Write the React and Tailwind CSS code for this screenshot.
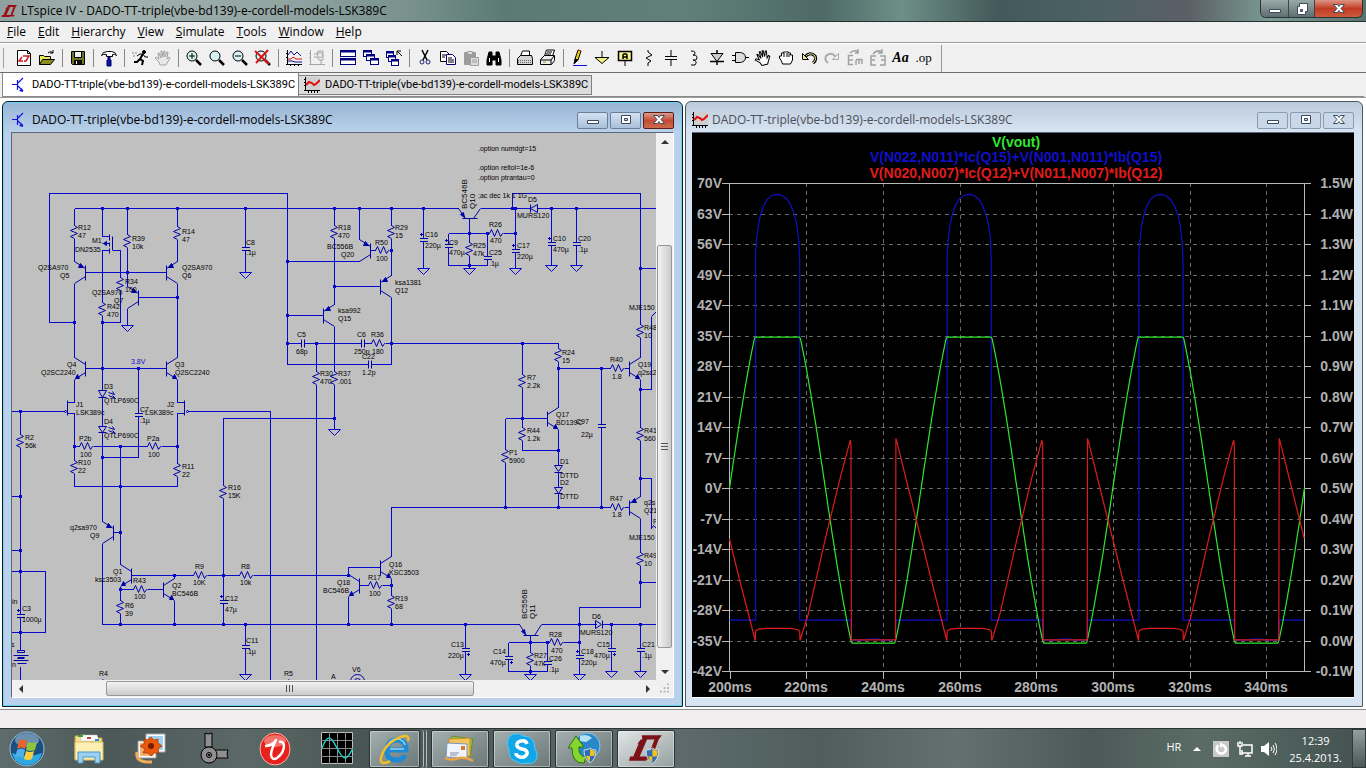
import { useState } from "react";

const DOC = "DADO-TT-triple(vbe-bd139)-e-cordell-models-LSK389C";

/* ---------- schematic data ---------- */

const WIRES = [
    "M74 322H49V193H287V364H368M371 364H391V297",
    "M74 208H458M480 208H529M537 208H656",
    "M74 208V225M74 238V261M74 283V357M74 379V402H67M67 413H74V460M74 473V486H177V476M177 463V413H184M184 402H177V379M177 357V283M177 261V239M177 226V208",
    "M85 272H166M85 368H166M138 297H177M127 208V234M127 247V286M127 308V325",
    "M102 208V236H109M109 250H102V302M102 315V390M102 397V426M102 432V521M112 250H120V277M120 290V322H102",
    "M138 368V413M138 416V457H102M11 411H64M187 411H270V680",
    "M74 446H79M93 446H147M161 446H177M120 446V564M113 532H120M102 543V624H519",
    "M131 575H193M207 575H239M253 575H348V567H380M120 586V600M120 613V624M120 589H133M147 589H163M174 575V578M174 600V624",
    "M223 624V603M223 600V575V498M223 485V418H334M20 411V434M20 447V614M20 617V650M20 666V680",
    "M11 496H20M11 550H20M11 571H45V632H11",
    "M245 208V247M245 250V272M245 624V645M245 648V674",
    "M287 343H301M304 343H361M364 343H371M385 343H558V348M316 343V371M316 384V680",
    "M334 208V225M334 238V304M334 326V371M334 384V429M334 286H380M287 315H323",
    "M391 208V225M391 238V275M370 250H375M389 250H391M359 208V239M359 261H287",
    "M423 208V238M423 241V268M448 233H489M503 233H515M448 233V244M448 247V265H487V259M487 256V233",
    "M469 218V242M469 255V268M515 208V249M515 252V268M512 208V193H640V324M640 337V357M640 268H656",
    "M551 208V242M551 245V265M576 208V242M576 245V265",
    "M640 379V427M640 440V496M640 518V552M640 565V607H579V655M579 658V674M640 389H651V316M640 478H651V528M640 582H656",
    "M558 361V407M558 429V465M558 472V487M558 493V507M558 368H610M624 368H629M505 418H547",
    "M522 343V374M522 387V427M522 440V450H558M505 418V449M505 462V507M601 368V424M601 427V507",
    "M391 556V507H610M624 507H629M391 578V595M391 608V624M359 585H368M382 585H391M348 596V624",
    "M541 624H596M602 624H656M530 635V652M530 665V674M508 642H549M563 642H579M508 642V656M508 659V671H547V664M547 661V642",
    "M465 624V648M465 651V674M611 624V648M611 651V671M640 624V648M640 651V671",
];

const DOTS = [
    [102, 208], [127, 208], [177, 208], [245, 208], [334, 208], [359, 208], [391, 208], [423, 208], [512, 208], [515, 208], [551, 208], [576, 208],
    [127, 272], [177, 297], [102, 322], [74, 322], [102, 368], [138, 368], [20, 411], [74, 446], [120, 446], [177, 446], [102, 457], [120, 486],
    [20, 496], [20, 550], [20, 571], [20, 632], [120, 532], [120, 589], [174, 575], [223, 575], [348, 575], [120, 624], [174, 624], [223, 624],
    [245, 624], [348, 624], [391, 624], [465, 624], [391, 585], [334, 418], [287, 261], [287, 315], [287, 343], [316, 343], [391, 343], [334, 286],
    [391, 250], [469, 233], [487, 233], [515, 233], [469, 265], [522, 343], [558, 368], [601, 368], [522, 418], [558, 450], [505, 507], [558, 507],
    [601, 507], [640, 268], [640, 389], [640, 478], [640, 582], [579, 624], [579, 642], [611, 624], [640, 624], [530, 642], [547, 642], [530, 671],
];

const RES_V = [
    [74, 225], [177, 226], [127, 234], [120, 277], [102, 302], [74, 460], [177, 463], [20, 434], [223, 485], [120, 600], [334, 225], [391, 225],
    [316, 371], [334, 371], [469, 242], [640, 324], [640, 427], [640, 552], [558, 348], [522, 374], [522, 427], [505, 449], [391, 595], [530, 652],
    [102, 679], [288, 679],
];
const RES_H = [[79, 446], [147, 446], [133, 589], [193, 575], [239, 575], [371, 343], [375, 250], [489, 233], [610, 368], [610, 507], [368, 585], [549, 642]];

const CAPS_V = [
    [138, 413], [223, 600, "+"], [20, 614, "+"], [245, 247], [245, 645], [423, 238, "+"], [448, 244, "+"], [487, 256], [515, 249, "+"], [551, 242, "+"],
    [576, 242], [601, 424], [465, 648, "-"], [508, 656, "-"], [547, 661], [579, 655, "+"], [611, 648, "-"], [640, 648],
];
const CAPS_H = [[301, 343], [361, 343], [368, 364]];
const GROUNDS = [[127, 325], [245, 272], [245, 674], [334, 429], [423, 268], [469, 268], [515, 268], [551, 265], [576, 265], [465, 674], [530, 674], [579, 674], [611, 671], [640, 671]];

// [bar x, centre y, side of the arms, type]
const TRANSISTORS = [
    [85, 272, -1, "pnp"], [166, 272, 1, "pnp"], [138, 297, -1, "pnp"], [85, 368, -1, "npn"], [166, 368, 1, "npn"], [113, 532, -1, "pnp"],
    [131, 575, -1, "npn"], [163, 589, 1, "npn"], [323, 315, 1, "pnp"], [380, 286, 1, "pnp"], [370, 250, -1, "pnp"], [380, 567, 1, "npn"],
    [359, 585, -1, "npn"], [547, 418, 1, "npn"], [629, 368, 1, "npn"], [629, 507, 1, "pnp"],
];

const LABELS = [
    [78, 230, "R12"], [78, 238, "47"], [92, 243, "M1"], [75, 252, "DN2535"], [132, 241, "R39"], [132, 249, "10k"], [182, 234, "R14"], [182, 242, "47"],
    [38, 270, "Q2SA970"], [60, 278, "Q5"], [182, 270, "Q2SA970"], [182, 278, "Q6"], [125, 284, "R34"], [125, 292, "100"], [92, 295, "Q2SA970"],
    [114, 303, "Q7"], [107, 309, "R42"], [107, 317, "470"], [67, 367, "Q4"], [41, 375, "Q2SC2240"], [175, 367, "Q3"], [175, 375, "Q2SC2240"],
    [104, 389, "D3"], [104, 403, "QTLP690C"], [76, 407, "J1"], [76, 415, "LSK389c"], [167, 407, "J2"], [145, 415, "LSK389c"], [140, 412, "C7"],
    [140, 423, ".1µ"], [104, 424, "D4"], [104, 438, "QTLP690C"], [79, 441, "P2b"], [80, 457, "100"], [147, 441, "P2a"], [148, 457, "100"],
    [78, 465, "R10"], [78, 473, "22"], [182, 469, "R11"], [182, 477, "22"], [25, 440, "R2"], [25, 448, "56k"], [70, 530, "q2sa970"], [90, 538, "Q9"],
    [113, 574, "Q1"], [95, 582, "ksc3503"], [133, 583, "R43"], [134, 599, "100"], [172, 588, "Q2"], [172, 596, "BC546B"], [125, 608, "R6"],
    [125, 616, "39"], [195, 569, "R9"], [193, 585, "10K"], [241, 569, "R8"], [240, 585, "10k"], [228, 490, "R16"], [228, 498, "15K"],
    [225, 601, "C12"], [225, 612, "47µ"], [22, 611, "C3"], [22, 622, "1000µ"], [12, 604, "in"], [11, 647, "s"], [12, 667, "n"], [99, 676, "R4"],
    [284, 676, "R5"], [246, 245, "C8"], [246, 255, ".1µ"], [246, 643, "C11"], [246, 654, ".1µ"], [338, 230, "R18"], [338, 238, "470"],
    [327, 249, "BC556B"], [341, 257, "Q20"], [375, 245, "R50"], [376, 261, "100"], [395, 230, "R29"], [395, 238, "15"], [425, 237, "C16"],
    [425, 248, "220µ"], [395, 285, "ksa1381"], [395, 293, "Q12"], [338, 313, "ksa992"], [338, 321, "Q15"], [297, 337, "C5"], [296, 354, "68p"],
    [357, 337, "C6"], [354, 354, "250p"], [371, 337, "R36"], [372, 354, "180"], [362, 359, "C22"], [362, 375, "1.2p"], [320, 376, "R30"],
    [320, 384, "470"], [338, 376, "R37"], [338, 384, ".001"], [478, 151, ".option numdgt=15"], [478, 170, ".option reltol=1e-6"],
    [478, 180, ".option ptrantau=0"], [478, 198, ";ac dec 1k 1 1G"], [528, 202, "D5"], [517, 218, "MURS120"], [489, 227, "R26"], [490, 243, "470"],
    [449, 245, "C9"], [449, 255, "470µ"], [473, 248, "R25"], [473, 256, "47k"], [489, 255, "C25"], [489, 266, ".1µ"], [517, 248, "C17"],
    [517, 259, "220µ"], [553, 241, "C10"], [553, 252, "470µ"], [578, 241, "C20"], [578, 252, ".1µ"], [629, 310, "MJE150"], [644, 330, "R48"],
    [644, 338, "10"], [562, 355, "R24"], [562, 363, "15"], [610, 362, "R40"], [612, 379, "1.8"], [638, 367, "Q19"], [638, 375, "q2sc2"],
    [527, 380, "R7"], [527, 388, "2.2k"], [556, 417, "Q17"], [556, 425, "BD139C"], [576, 424, "C97"], [581, 437, "22µ"], [527, 433, "R44"],
    [527, 441, "1.2k"], [509, 455, "P1"], [509, 463, "5900"], [560, 464, "D1"], [560, 478, "DTTD"], [560, 485, "D2"], [560, 499, "DTTD"],
    [644, 433, "R41"], [644, 441, "560"], [610, 501, "R47"], [612, 517, "1.8"], [644, 505, "q2s"], [644, 513, "Q21"], [629, 540, "MJE150"],
    [644, 558, "R49"], [644, 566, "10"], [653, 524, "R"], [337, 585, "Q18"], [323, 593, "BC546B"], [368, 580, "R17"], [369, 596, "100"],
    [389, 567, "Q16"], [389, 575, "KSC3503"], [395, 601, "R19"], [395, 609, "68"], [451, 647, "C13"], [448, 658, "220µ"], [493, 654, "C14"],
    [490, 665, "470µ"], [534, 658, "R27"], [534, 666, "47k"], [549, 661, "C26"], [549, 672, ".1µ"], [549, 637, "R28"], [551, 653, "470"],
    [592, 619, "D6"], [580, 635, "MURS120"], [581, 654, "C18"], [581, 665, "220µ"], [597, 647, "C15"], [594, 658, "470µ"], [642, 647, "C21"],
    [642, 658, ".1µ"], [352, 672, "V6"], [331, 679, "A"],
];

const SIDE_LABELS = [[467, 209, "BC546B"], [475, 209, "Q10"], [527, 619, "BC556B"], [535, 619, "Q11"]];

const Transistor = ({ x, y, dir, type }) => (
    <g>
        <path d={`M${x} ${y - 7}v15M${x} ${y - 4}l${dir * 11} -7M${x} ${y + 4}l${dir * 11} 7`} />
        {type === "pnp"
            ? <path fill="#0000a8" d={`M${x + dir * 2} ${y - 5}l${dir * 3} -4l${dir * 2} 4z`} />
            : <path fill="#0000a8" d={`M${x + dir * 10} ${y + 10}l${dir * -2} -4l${dir * -2} 4z`} />}
    </g>
);

const Schematic = () => (
    <svg width="644" height="547" viewBox="12 133 644 547" className="block shrink-0" role="img" aria-label="Amplifier schematic">
        <g transform="translate(.5 .5)" fill="none" stroke="#0808cc" shapeRendering="crispEdges">
            {WIRES.map((d) => <path key={d} d={d} />)}
            <g stroke="none" fill="#0808cc">
                {DOTS.map(([x, y]) => <rect key={`${x}-${y}`} x={x - 1.5} y={y - 1.5} width="3" height="3" />)}
            </g>
        </g>
        <g transform="translate(.5 .5)" fill="none" stroke="#0000a8">
            {RES_V.map(([x, y]) => <path key={`${x}-${y}`} d={`M${x} ${y}l3 2l-7 3l7 3l-7 3l4 2`} />)}
            {RES_H.map(([x, y]) => <path key={`${x}-${y}`} d={`M${x} ${y}l2 -4l3 7l3 -7l3 7l2 -3h1`} />)}
            {CAPS_V.map(([x, y, sign]) => (
                <g key={`${x}-${y}`} shapeRendering="crispEdges">
                    <path d={`M${x - 4} ${y}h8M${x - 4} ${y + 3}h8`} />
                    {sign === "+" && <path d={`M${x - 4} ${y - 4}h3m-1.5 -1.5v3`} />}
                    {sign === "-" && <path d={`M${x + 1} ${y + 6}h3m-1.5 -1.5v3`} />}
                </g>
            ))}
            {CAPS_H.map(([x, y]) => <path key={`${x}-${y}`} d={`M${x} ${y - 4}v8M${x + 3} ${y - 4}v8`} />)}
            {GROUNDS.map(([x, y]) => <path key={`${x}-${y}`} stroke="#0808cc" d={`M${x - 6} ${y}h12l-6 6z`} />)}
            {TRANSISTORS.map(([x, y, dir, type]) => <Transistor key={`${x}-${y}`} x={x} y={y} dir={dir} type={type} />)}

            {/* Q10 / Q11 lie on their side */}
            <path d="M462 218h15M458 208l7 10M480 208l-7 10" />
            <path fill="#0000a8" d="M464 217l-4 -3l3 -2z" />
            <path d="M523 635h15M519 624l7 11M541 624l-7 11" />
            <path fill="#0000a8" d="M525 634l-4 -3l3 -2z" />

            {/* M1 and the two JFETs */}
            <path d="M109 234v6M109 242v4M109 248v5M112 236v14M102 243h7" />
            <path fill="#0000a8" d="M103 243l3 -2v4z" />
            <path d="M67 400v15M184 400v15" />
            <circle cx="65" cy="411" r="1" />
            <circle cx="187" cy="411" r="1" />

            {/* diodes */}
            <path d="M98 390h8l-4 7zM98 397h8M98 426h8l-4 6zM98 432h8" />
            <path d="M108 392l6 2l-2 -3M108 395l7 3l-3 -3M108 427l6 2l-2 -3M108 430l7 3l-3 -3" />
            <path d="M554 465h8l-4 6zM554 472h8M554 487h8l-4 6zM554 493h8" />
            <path d="M530 204v8M537 204v8l-7 -4zM595 620v8l6 -4zM602 620v8" />

            {/* battery, output devices at the right edge, V6 */}
            <path d="M17 650h7v2h-7zM13 655h15M17 657h7M17 658h7M13 660h15M17 663h7M23 663h3" />
            <path d="M651 316l5 -5M651 528l2 -3l3 3" />
            <circle cx="357" cy="681" r="7" />
            <circle cx="357" cy="681" r="3" />
        </g>
        <g fontFamily="'Liberation Sans', Arial, sans-serif" fontSize="7" fill="#000">
            {LABELS.map(([x, y, t]) => <text key={`${x}-${y}-${t}`} x={x} y={y}>{t}</text>)}
            <text x="131" y="364" fill="#1010c0">3.8V</text>
            {SIDE_LABELS.map(([x, y, t]) => <text key={t} fontSize="8" transform={`translate(${x} ${y}) rotate(-90)`}>{t}</text>)}
        </g>
    </svg>
);

/* ---------- waveform plot ---------- */

const PX_MS = 575 / 150;
const px = (ms) => 729.5 + (ms - 200) * PX_MS;
const vy = (v) => 183 + (70 - v) * (488 / 112);
const wy = (w) => 640.5 - w * 305;

const voutPoints = () => {
    const pts = [];
    for (let t = 200; t <= 350; t += 0.25) {
        const v = Math.max(-35.6, Math.min(34.6, 47 * Math.sin((2 * Math.PI * t) / 50)));
        pts.push(`${px(t).toFixed(1)},${vy(v).toFixed(1)}`);
    }
    return pts.join(" ");
};

const toPoints = (list, start) =>
    list.filter(([t]) => start + t <= 350).map(([t, w]) => `${px(start + t).toFixed(1)},${wy(w).toFixed(1)}`);

const Q15_CYCLE = [
    [0, 0.067], [6.8, 0.067], [6.8, 1.27], [7.1, 1.32], [7.6, 1.367], [8.2, 1.4], [9, 1.428], [10, 1.449], [11.2, 1.46], [12.6, 1.463], [13.8, 1.459],
    [15, 1.447], [16, 1.427], [16.9, 1.398], [17.5, 1.365], [18, 1.32], [18.3, 1.25], [18.3, 0.067], [31.7, 0.067], [31.8, 0.001], [35.5, 0.001],
    [36, 0.005], [39, 0.005], [39.5, 0.001], [43.3, 0.001], [43.4, 0.067], [49.9, 0.067],
];
const Q12_CYCLE = [
    [0, 0.333], [2.5, 0.205], [6.7, 0], [6.8, 0.031], [7.6, 0.037], [9.5, 0.04], [16, 0.04], [17.7, 0.036], [18.3, 0.03], [18.4, 0],
    [20.5, 0.085], [25, 0.333], [29, 0.54], [31.5, 0.657], [31.7, 0.64], [31.8, 0.002], [43.3, 0.002], [43.4, 0.663], [43.7, 0.65], [47, 0.482], [49.9, 0.336],
];
const cycles = (list) => [0, 50, 100].flatMap((c) => toPoints(list, 200 + c)).join(" ");

const VOLTS = Array.from({ length: 17 }, (_, i) => 70 - i * 7);
const WATTS = Array.from({ length: 17 }, (_, i) => (1.5 - i / 10).toFixed(1).replace("-0.0", "0.0"));
const TIMES = [200, 220, 240, 260, 280, 300, 320, 340];

const Plot = () => (
    <svg viewBox="692 133 662 564" className="block h-full w-full bg-black" role="img" aria-label="Waveform plot">
        <g fill="none" stroke="#6c6c6c" strokeDasharray="4 4" shapeRendering="crispEdges">
            {VOLTS.slice(1, -1).map((v) => <path key={v} d={`M729 ${Math.round(vy(v)) + 0.5}H1304`} />)}
            {TIMES.slice(1).map((t) => <path key={t} d={`M${Math.round(px(t)) + 0.5} 183V671`} />)}
        </g>
        <g fill="none" stroke="#b8b8b8" shapeRendering="crispEdges">
            <path d="M729.5 183.5H1304.5V671.5H729.5z" />
            {VOLTS.map((v) => <path key={v} d={`M722 ${Math.round(vy(v)) + 0.5}h7M1305 ${Math.round(vy(v)) + 0.5}h6`} />)}
            {TIMES.map((t) => <path key={t} d={`M${Math.round(px(t)) + 0.5} 672v7`} />)}
        </g>
        <g fill="none" strokeWidth="1.2">
            <polyline stroke="#1010c8" points={cycles(Q15_CYCLE)} />
            <polyline stroke="#2fe62f" points={voutPoints()} />
            <polyline stroke="#dc1c1c" points={cycles(Q12_CYCLE)} />
        </g>
        <g fontFamily="'Liberation Sans', Arial, sans-serif" fontSize="14" fontWeight="bold" fill="#b0b0b0">
            {VOLTS.map((v) => <text key={v} x="722" y={Math.round(vy(v)) + 5} textAnchor="end">{v}V</text>)}
            {WATTS.map((w, i) => <text key={w} x="1353" y={Math.round(183 + i * 30.5) + 5} textAnchor="end">{w}W</text>)}
            {TIMES.map((t) => <text key={t} x={Math.round(px(t))} y="692" textAnchor="middle">{t}ms</text>)}
            <g textAnchor="middle">
                <text x="1016" y="147" fill="#2fe62f">V(vout)</text>
                <text x="1016" y="162" fill="#1010c8">V(N022,N011)*Ic(Q15)+V(N001,N011)*Ib(Q15)</text>
                <text x="1016" y="178" fill="#e01c1c">V(N020,N007)*Ic(Q12)+V(N011,N007)*Ib(Q12)</text>
            </g>
        </g>
    </svg>
);

/* ---------- icons ---------- */

const Ico = ({ children, s = 18, box = "0 0 18 18" }) => (
    <svg width={s} height={s} viewBox={box} fill="none" stroke="#000" className="block shrink-0" aria-hidden="true">{children}</svg>
);

// slanted L with the T hooked over it
const LT_MARK = "M12 8h6l-7 16h8l-2 4H1l1-4h3l5-12H9zM13 4h19l-3 4-6 16h4l-1 3h-9l1-3h1l6-16h-9l-2 3z";

const LtLogo = () => (
    <svg width="16" height="16" viewBox="0 0 32 32" fill="#9c1014" aria-hidden="true" className="block shrink-0">
        <path d={LT_MARK} />
    </svg>
);

const BjtIcon = () => (
    <Ico s={16} box="0 0 16 16"><path stroke="#1414e0" d="M1 7.500h5M6.500 3v10M7 6l5-5M7 9l5 5" strokeWidth="1.200" /><path fill="#1414e0" stroke="none" d="M12 15l-4-1 3-3z" /></Ico>
);

const WaveIcon = () => (
    <Ico s={16} box="0 0 16 16">
        <path fill="#cfcfcf" stroke="none" d="M1 0h15v13H1z" />
        <path d="M1.500 0v14M0 13.500h16M0 2.500h2M0 5.500h2M0 8.500h2M4.500 13v3M7.500 13v3M10.500 13v3M13.500 13v3" />
        <path stroke="#e01010" strokeWidth="2" d="M2 8l3-3 3 1 2 2 2-1 4-4" />
    </Ico>
);

const Lens = ({ children }) => (
    <Ico><circle cx="7" cy="7" r="5" fill="#d8f4f4" /><path d="M11 11l5 5" strokeWidth="2.500" />{children}</Ico>
);
const Win = ({ x, y, w = 8, h = 6 }) => (
    <><rect x={x} y={y} width={w} height={h} fill="#fff" stroke="#000080" /><path stroke="#000080" strokeWidth="2" d={`M${x} ${y + 1}h${w}`} /></>
);
const HAND = "M6 16l-1-3-4-4 1-1 3 2-1-6h1l2 5V2h1l1 6 1-6h1v6l2-5h1l-1 7 2-2 1 1-3 5-1 2z";

const TOOLS = [
    ["New Schematic", <Ico><path fill="#fff" d="M2.500 1.500h10l3 3v12h-13z" /><path d="M12.500 1.500v3h3" /><path stroke="#d01818" strokeWidth="1.500" d="M7 8l-3 4h4M8 7h6l-3 5H9" /></Ico>],
    ["Open", <Ico><path fill="#e8e85c" d="M1.500 15.500v-9h4l1 1h6v3" /><path fill="#8c8c20" d="M1.500 15.500l3-5h12l-4 5z" /><path d="M10 4q3-3 5 0m0-3v3h-3" /></Ico>],
    null,
    ["Save", <Ico><path fill="#6f7424" d="M2.500 2.500h13v13h-12l-1-1z" /><path fill="#efefef" d="M5.500 2.500h7v6h-7z" /><path fill="#111" d="M5.500 11.500h7v4h-7z" /><path stroke="#fff" d="M7.500 12v3" /></Ico>],
    null,
    ["Control Panel", <Ico><path fill="#fff" d="M1.500 6.500q1-4 6-4h4q4 0 5 4-2-2-4-1v2h-6v-2q-3-1-5 1z" /><path fill="#1010b0" stroke="#000060" d="M8 8h2v3h1v6H7v-6h1z" /></Ico>],
    null,
    ["Run", <Ico><circle cx="13" cy="3" r="1.500" fill="#000" /><path strokeWidth="2" d="M12 5l-3 5 3 2-1 4M9 10l-3 3H3" /><path d="M6 7l3-2h3l2 3h3" /><path stroke="#888" strokeDasharray="2 1" d="M1 4h5M2 7h2" /></Ico>],
    ["Halt", <Ico><path d={HAND} stroke="#a4a4a4" fill="#e8e8e8" /></Ico>],
    null,
    ["Zoom in", <Lens><path d="M4 7h6M7 4v6" /></Lens>],
    ["Pan", <Lens />],
    ["Zoom back", <Lens><path d="M4 7h6" /></Lens>],
    ["Zoom full", <Lens><path stroke="#d81414" strokeWidth="2" d="M1 2l14 13M14 1L2 14" /></Lens>],
    null,
    ["Autorange", <Ico><path d="M2.500 1v15M1 15.500h16M1 4.500h2M1 8.500h2M5.500 15v2M9.500 15v2M13.500 15v2" /><path stroke="#101090" d="M3 6l3-4 3 4 3-3 4 4" /><path stroke="#d01414" d="M3 10h3l2-2 3 2h6" /><path stroke="#101090" d="M3 12h4l3 1h7" /></Ico>],
    ["Plot settings", <Ico><path stroke="#a4a4a4" d="M2.500 1v15M1 15.500h16M1 4.500h2M1 8.500h2M6 5h3l1-3h5v9h-4l-2-3H6M13 11v4" /><circle stroke="#a4a4a4" cx="12" cy="6" r="2.500" /></Ico>],
    null,
    ["Tile", <Ico><Win x={1.5} y={1.5} w={15} h={6} /><Win x={1.5} y={9.5} w={15} h={6} /></Ico>],
    ["Cascade", <Ico><Win x={1.5} y={1.5} /><Win x={4.5} y={5.5} /><Win x={8.5} y={9.5} /></Ico>],
    ["Close all", <Ico><Win x={1.5} y={2.5} w={7} /><Win x={3.5} y={6.5} w={7} /><Win x={6.5} y={10.5} w={7} /><path d="M17 7l-5-5m0 4V2h4" /></Ico>],
    null,
    ["Cut", <Ico><path d="M6 1l5 10M12 1L7 11" strokeWidth="1.500" /><circle cx="6" cy="13" r="2" stroke="#202070" /><circle cx="12" cy="13" r="2" stroke="#202070" /></Ico>],
    ["Copy", <Ico><path fill="#fff" d="M1.500 2.500h6l3 3v7h-9z" /><path fill="#fff" stroke="#000070" d="M7.500 5.500h6l3 3v7h-9z" /><path d="M3 6h4M3 8h3M9 9h4M9 11h6M9 13h6" /></Ico>],
    ["Paste", <Ico><path fill="#9c9c9c" stroke="#9c9c9c" d="M2.500 3.500h11v12h-11z" /><path fill="#ddd" stroke="#9c9c9c" d="M5.500 2.500h5v3h-5zM8.500 8.500h8v8h-8z" /><path stroke="#9c9c9c" d="M10 11h5M10 13h5" /></Ico>],
    ["Find", <Ico><path fill="#000" d="M4 3h3v4h4V3h3l2 8v5h-5v-5H7v5H2v-5z" /><path stroke="#fff" d="M4.500 9v4M13.500 9v4" /></Ico>],
    null,
    ["Print setup", <Ico><path fill="#fff" d="M4.500 7l2-5h7v5" /><path fill="#d4d4d4" d="M1.500 9.500l3-3h11l1 3v6h-15z" /><path stroke="#666" strokeDasharray="1 1" d="M2 11.500h13M2 13.500h13" /></Ico>],
    ["Print", <Ico><path fill="#fff" d="M5.500 7l2-6h8l-2 6" /><path fill="#eee" d="M1.500 10.500l4-4h10v5l-3 4h-11z" /><path d="M8 3h5M7 5h5M2 11h10v4M12 11l3-4" /><path stroke="#a0a020" d="M4 13h3" /></Ico>],
    null,
    ["Wire", <Ico><path stroke="#1010d0" d="M3 16.500h14" /><path fill="#f0c810" d="M5 10l3-9 3 1-3 9z" /><path fill="#000" d="M5 10l3 1-4 4z" /><path stroke="#d02020" d="M8 1l3 1" /></Ico>],
    ["Ground", <Ico><path d="M9 2v6" /><path fill="#f0f080" d="M2 8.500h14l-7 6z" /></Ico>],
    ["Label Net", <Ico><path fill="#f4f490" strokeWidth="1.500" d="M2.500 2.500h13v9h-13z" /><path d="M9 12v5" /><path strokeWidth="1.500" d="M7 10V6l1-1h2l1 1v4M7 8h4" /></Ico>],
    ["Resistor", <Ico><path d="M9 1v2l4 3-6 3 5 3-3 2v3" /></Ico>],
    ["Capacitor", <Ico><path d="M9 1v6.500M3 7.500h12M3 10.500h12M9 10.500V17" /></Ico>],
    ["Inductor", <Ico><path d="M6 2q6 0 3 4H8q6 0 3 5H8q5 1 2 5H6" /></Ico>],
    ["Diode", <Ico><path d="M9 1v15M2 12.500h14" strokeWidth="1.500" /><path fill="#ccc" d="M3 4.500h12l-6 8z" /></Ico>],
    ["Component", <Ico><path fill="#ddd" d="M4.500 3.500h5q5 1 5 5t-5 5h-5z" /><path d="M1 6.500h3M1 11.500h3M14 8.500h4" /></Ico>],
    ["Move", <Ico><path fill="#fff" d={HAND} transform="rotate(-15 9 9)" /></Ico>],
    ["Drag", <Ico><path fill="#fff" d="M5.500 15l-1-3-2-3V7h2V4h2V3h2l1 0h2v1h2v2h2v5l-2 4z" /><path d="M7 4v4M10 4v4M12 5v3" /></Ico>],
    ["Undo", <Ico><path strokeWidth="3" d="M5 8q5-6 10-1 2 4-2 7" /><path stroke="#f0f0a0" d="M5 8q5-6 10-1 2 4-2 7" /><path fill="#e8e890" d="M2.500 4.500v6h6z" /></Ico>],
    ["Redo", <Ico><path stroke="#aaa" strokeWidth="2" d="M13 8Q8 2 3 7q-2 4 2 7" /><path fill="#eee" stroke="#aaa" d="M15.500 4.500v6h-6z" /></Ico>],
    ["Rotate", <Ico><path stroke="#a0a0a0" strokeWidth="1.500" d="M7 6.500H2.500v9H7M3 11h4M10 16v-5M10 10.500h6M13 11v4M16 10v5M4 4q4-4 8-1m0-3v4H9" /></Ico>],
    ["Mirror", <Ico><path stroke="#a0a0a0" strokeWidth="1.500" d="M7 7H2v9h5M2 11h4M11 7h5v9h-5M16 11h-4M4 5q4-5 9-2m0-3v4H9" /></Ico>],
    ["Text", <span className="font-['Liberation_Serif',serif] text-[14px] font-bold italic">Aa</span>],
    ["SPICE Directive", <span className="font-['Liberation_Serif',serif] text-[13px]">.op</span>],
];

const Shield = () => (
    <g stroke="#ececec" strokeWidth=".8">
        <path fill="#2e6cb8" d="M17 18q5 0 6-2 2 2 6 2 0 9-6 13-6-4-6-13z" />
        <path fill="#f0c020" stroke="none" d="M23 17q2 1 5 2 0 3-1 5h-4zM23 24v6q-3-2-4-6z" />
    </g>
);

const FolderIcon = () => (
    <Ico s={32} box="0 0 32 32">
        <path fill="#f5df8c" stroke="#b99a3c" d="M2 4l9-1 2 3h16v21H2z" />
        <path fill="#fff" stroke="#bbb" strokeWidth=".5" d="M8 3h16l2 6H8z" />
        <path stroke="#3c9c3c" strokeWidth="2" d="M5 4h5" /><path stroke="#c04040" strokeWidth="2" d="M14 6h4" /><path stroke="#3c84d0" strokeWidth="2" d="M22 8h4" />
        <path fill="#fbefb4" stroke="#d8bd62" d="M2 10h28v18H2z" />
        <path fill="#9bd0f0" stroke="#4c94c8" d="M5 31V20h22v11h-5v-6H10v6z" />
    </Ico>
);
const GalleryIcon = () => (
    <Ico s={32} box="0 0 32 32">
        <path fill="#fff" stroke="#aaa" d="M11 2h19v18H11z" /><path fill="#9fd0f0" stroke="none" d="M13 4h15v14H13z" />
        <path fill="#fff" stroke="#999" d="M3 9h18v17H3z" /><path fill="#f0b070" stroke="none" d="M5 11h14v13H5z" />
        <path fill="#e8590c" stroke="#a83000" strokeWidth=".7" d="M16 5l3 3 4-1v4l4 3-4 3 1 4-5 0-3 3-3-3-5 0 2-4-5-3 4-2V7l3 1z" /><circle cx="16" cy="14" r="3" fill="#7a1c00" stroke="none" />
        <path stroke="#f2ab58" strokeWidth="3" d="M2 20q-2 11 15 10" />
    </Ico>
);
const JointIcon = () => (
    <Ico s={34} box="0 0 34 34">
        <path fill="#8f8f8f" d="M9 1q3 2 7 0v14H9zM18 18h14q-2 4 0 8H18z" />
        <circle cx="13" cy="23" r="8" fill="#8f8f8f" /><circle cx="13" cy="23" r="2.500" /><circle cx="13" cy="23" r=".8" fill="#000" />
    </Ico>
);
const TrendIcon = () => (
    <Ico s={34} box="0 0 34 34">
        <ellipse cx="17" cy="17" rx="15" ry="16" fill="#e8211d" stroke="#f6b8b0" /><ellipse cx="17" cy="9" rx="11" ry="6" fill="#f4706a" stroke="none" />
        <path stroke="#fff" strokeWidth="2.500" strokeLinejoin="round" d="M7 14q7 0 11-6-5 10-5 15 1 6 6 3 7-5 7-13-1-4-5-3" />
    </Ico>
);
const ScopeIcon = () => (
    <Ico s={32} box="0 0 32 32">
        <path fill="#000" stroke="#c0c0c0" d="M.5.5h31v31H.5z" /><path stroke="#888" d="M8.500 0v32M16.500 0v32M24.500 0v32M0 8.500h32M0 16.500h32M0 24.500h32" />
        <path stroke="#20c8c0" strokeWidth="1.500" d="M1 16Q5 6 8 6t8 10 8 10 8-10" />
    </Ico>
);
const IeIcon = () => (
    <Ico s={34} box="0 0 34 34">
        <path stroke="#1f8ad4" strokeWidth="5" d="M9 18h19q0-10-9-10t-10 10 10 10q6 0 8-5" />
        <path stroke="#8cd8fa" strokeWidth="1.500" d="M9 15q3-8 10-8 6 0 8 6M12 17h14" />
        <path stroke="#f2bf28" strokeWidth="2.500" d="M30 9q2-7-7-4Q11 9 5 20q-5 11 1 11 3 0 6-2" />
    </Ico>
);
const MailIcon = () => (
    <Ico s={32} box="0 0 32 32">
        <path fill="#8fbf50" stroke="#688c30" d="M8 3l21 3-3 18-20-3z" /><path fill="#f2c45c" stroke="#c89028" d="M5 6l21-1v18H5z" />
        <path fill="#eef4fb" stroke="#7898b8" d="M3 10l20 1v14L2 24z" /><path fill="#d88030" stroke="none" d="M17 13h4v4h-4z" />
        <path stroke="#88a" d="M6 20h9M6 22h7" /><path stroke="#eea248" strokeWidth="2.500" d="M1 25q6 3 14 0 8-1 14 3" />
    </Ico>
);
const SkypeIcon = () => (
    <Ico s={34} box="0 0 34 34">
        <path fill="#10a6e8" stroke="#58c8f4" d="M10 2q5-1 8 2 12 0 12 13 3 4 2 8-2 8-9 6-6 2-11-1Q3 27 4 17 1 13 3 8q2-6 7-6z" />
        <path stroke="#fff" strokeWidth="3.500" d="M22 12q-1-4-6-3-5 1-4 5 1 2 5 3 6 1 5 5-2 4-7 3-4-1-4-4" />
    </Ico>
);
const GlobeIcon = () => (
    <Ico s={34} box="0 0 34 34">
        <circle cx="20" cy="14" r="13" fill="#2a88c8" stroke="#88c4e8" /><path fill="#b4e4f4" stroke="none" d="M13 4q7-3 12 2l-6 4-6-1z" />
        <path fill="#86d430" stroke="#2c7410" d="M1 16l8-12 8 11-5 0q-1 9 7 10l-2 6Q5 32 5 16z" /><Shield />
    </Ico>
);
const LtTaskIcon = () => (
    <Ico s={36} box="0 0 34 34"><path fill="#7c1216" stroke="none" d={LT_MARK} /><Shield /></Ico>
);

/* ---------- chrome ---------- */

const Glyph = ({ kind }) => (
    <svg width="14" height="12" viewBox="0 0 14 12" fill="#fff" stroke="#3c4a5c" aria-hidden="true">
        {kind === "min" && <path d="M1.500 6.500h11v3h-11z" />}
        {kind === "max" && <path fillRule="evenodd" d="M2.500 1.500h9v8h-9zM5.500 4.500v2h3v-2z" />}
        {kind === "restore" && <path fillRule="evenodd" d="M4.500.5h8v8h-2v3h-8v-8h2zM5.500 6.500v2h2v-2z" />}
        {kind === "close" && <path d="M1.500 1.500h4L7 3.500l1.500-2h4L9 5.500l3.500 4h-4L7 7.500l-1.500 2h-4L5 5.500z" />}
    </svg>
);

const ChildButtons = ({ active }) => (
    <div className="flex gap-[2px]">
        {["min", "max", "close"].map((k) => (
            <button
                key={k} type="button" aria-label={k}
                className={`flex h-[17px] w-[31px] items-center justify-center rounded-xs border ${active
                    ? k === "close" ? "border-[#5a1c18] bg-linear-to-b from-[#dc9a8e] via-[#c44a34] to-[#cc6a4c]" : "border-[#6b7f98] bg-linear-to-b from-[#d3e1f1] to-[#a9c0da]"
                    : "border-[#8d9bb0] bg-[#c9d8e8]"}`}
            >
                <Glyph kind={k} />
            </button>
        ))}
    </div>
);

const Thumb = ({ vertical }) => (
    <div className={vertical
        ? "mx-px flex grow-[401] items-center justify-center rounded-xs border border-[#989898] bg-linear-to-r from-[#f4f4f4] to-[#cacaca]"
        : "my-px flex grow-[364] items-center justify-center rounded-xs border border-[#989898] bg-linear-to-b from-[#f4f4f4] to-[#cacaca]"}
    >
        <svg width="9" height="9" viewBox="0 0 9 9" stroke="#555" aria-hidden="true" className={vertical ? "rotate-90" : ""}>
            <path d="M1.500 1v7M4.500 1v7M7.500 1v7" />
        </svg>
    </div>
);

const Arrow = ({ d, label }) => (
    <button type="button" aria-label={label} className="flex size-[17px] shrink-0 items-center justify-center">
        <svg width="8" height="8" viewBox="0 0 8 8" fill="#333" aria-hidden="true"><path d={d} /></svg>
    </button>
);

const TaskButton = ({ label, children, active }) => (
    <button
        type="button" aria-label={label}
        className={`flex h-[38px] w-[58px] items-center justify-center rounded-xs border border-[#2c3435] shadow-[inset_0_0_0_1px_rgba(255,255,255,0.4)] ${active ? "bg-linear-to-br from-[#e2e6e6] to-[#94a09f]" : "bg-linear-to-br from-[#a5b0b0] to-[#6a7877]"}`}
    >
        {children}
    </button>
);

export default function App() {
    const [tab, setTab] = useState(0);

    return (
        <div className="flex h-screen w-full flex-col overflow-hidden bg-[#f0f0f0] font-['Open_Sans','Noto_Sans',sans-serif] text-[12px] leading-4 text-black">

            {/* Title bar */}
            <header className="flex h-[22px] shrink-0 items-start justify-between border-b border-[#22302f] bg-[linear-gradient(90deg,#8fa19f_0%,#a3b2af_8%,#8ea39f_22%,#78918c_30%,#5c7a74_37%,#62807a_50%,#4e6966_60%,#6d8f87_66%,#43595a_73%,#4c6163_80%,#5b5f66_87%,#7b9c92_93%,#5a716e_100%)] pr-[3px] pl-px">
                <div className="flex h-[21px] items-center gap-1">
                    <LtLogo />
                    <h1>LTspice IV - {DOC}</h1>
                </div>
                <div className="flex h-[18px] overflow-hidden rounded-b-md border border-t-0 border-[#2a3335]">
                    <button type="button" aria-label="Minimize" className="flex w-[28px] items-center justify-center border-r border-[#3a4648] bg-linear-to-b from-[#9aa8a8] to-[#5f6e70]"><Glyph kind="min" /></button>
                    <button type="button" aria-label="Restore" className="flex w-[26px] items-center justify-center border-r border-[#3a4648] bg-linear-to-b from-[#9aa8a8] to-[#5f6e70]"><Glyph kind="restore" /></button>
                    <button type="button" aria-label="Close" className="flex w-[47px] items-center justify-center bg-linear-to-b from-[#dd9484] via-[#c23a20] to-[#cc5a3c]"><Glyph kind="close" /></button>
                </div>
            </header>

            {/* Menu */}
            <nav className="flex h-[21px] shrink-0 items-center border-b border-[#9c9c9c] pl-px">
                {["File", "Edit", "Hierarchy", "View", "Simulate", "Tools", "Window", "Help"].map((m) => (
                    <button key={m} type="button" className="px-[6px]"><u>{m[0]}</u>{m.slice(1)}</button>
                ))}
            </nav>

            {/* Toolbar */}
            <div className="flex h-[30px] shrink-0 items-center border-t border-b border-t-white border-b-[#6c6c6c]">
                <span className="mr-2 ml-[3px] h-5 w-px bg-[#a0a0a0]" />
                {TOOLS.map((t, i) => t
                    ? <button key={t[0]} type="button" aria-label={t[0]} className="flex h-[22px] w-[23px] items-center justify-center">{t[1]}</button>
                    : <span key={i} className="flex w-2 justify-center"><span className="h-[18px] w-px bg-[#888]" /></span>)}
                <span className="ml-[6px] h-[27px] w-px bg-[#9a9a9a]" />
            </div>

            {/* Document tabs */}
            <div className="mx-[2px] flex h-[24px] shrink-0 items-start border-b border-l border-[#8a8a8a] font-[Roboto,sans-serif] text-[11px]">
                {[BjtIcon, WaveIcon].map((TabIcon, i) => (
                    <button
                        key={i} type="button" onClick={() => setTab(i)}
                        className={`flex items-center gap-[5px] border-r border-[#808080] pr-[3px] whitespace-nowrap ${tab === i ? "h-[23px] bg-white pl-2" : "mt-[2px] h-[20px] border-t border-b bg-[#dcdcdc] pl-[5px]"}`}
                    >
                        <TabIcon />{DOC}
                    </button>
                ))}
            </div>

            {/* MDI area */}
            <main className="grid min-h-0 flex-1 grid-cols-[681fr_678fr] gap-[2px] border-t border-[#9a9a9a] bg-white pt-[3px] pr-[3px] pb-[2px] pl-[2px]">
                <section className="flex min-w-0 flex-col overflow-hidden rounded-t-md border border-[#101820] bg-[linear-gradient(#98b4d4,#b9d1ea_30px)] px-2 pb-2 shadow-[inset_0_0_0_1px_#6cd4f4]">
                    <div className="flex h-[30px] shrink-0 items-center justify-between pt-[6px]">
                        <div className="flex items-center gap-[5px]"><BjtIcon /><h2>{DOC}</h2></div>
                        <ChildButtons active />
                    </div>
                    <div className="grid min-h-0 flex-1 grid-cols-[1fr_17px] grid-rows-[1fr_17px] overflow-hidden border border-t-[#5c6878] border-r-white border-b-white border-l-[#5c6878] bg-[#f0f0f0]">
                        <div className="min-h-0 min-w-0 overflow-hidden bg-[#c0c0c0]"><Schematic /></div>
                        <div className="flex min-h-0 flex-col bg-[#f1f1f1]">
                            <Arrow label="Scroll up" d="M0 6l4-4 4 4z" />
                            <div className="grow-[97]" />
                            <Thumb vertical />
                            <div className="grow-[15]" />
                            <Arrow label="Scroll down" d="M0 2l4 4 4-4z" />
                        </div>
                        <div className="flex min-w-0 bg-[#f1f1f1]">
                            <Arrow label="Scroll left" d="M6 0L2 4l4 4z" />
                            <div className="grow-[78]" />
                            <Thumb />
                            <div className="grow-[168]" />
                            <Arrow label="Scroll right" d="M2 0l4 4-4 4z" />
                        </div>
                        <div className="flex items-end justify-end p-1">
                            <svg width="10" height="10" viewBox="0 0 10 10" fill="#b4b4b4" aria-hidden="true"><path d="M8 0h2v2H8zM4 4h2v2H4zM8 4h2v2H8zM0 8h2v2H0zM4 8h2v2H4zM8 8h2v2H8z" /></svg>
                        </div>
                    </div>
                </section>

                <section className="flex min-w-0 flex-col overflow-hidden rounded-t-md border border-[#4a5866] bg-[linear-gradient(#bccbdc,#d7e4f2_30px)] pr-2 pb-2 pl-[6px]">
                    <div className="flex h-[30px] shrink-0 items-center justify-between pt-[6px]">
                        <div className="flex items-center gap-1 text-[#4a4f57]"><WaveIcon /><h2>{DOC}</h2></div>
                        <ChildButtons />
                    </div>
                    <div className="min-h-0 flex-1 border-t border-b border-t-[#5c6878] border-b-white"><Plot /></div>
                </section>
            </main>

            {/* Status bar */}
            <div className="h-[19px] shrink-0 border-t border-[#8c8c8c] bg-[#f0eeee]" />

            {/* Taskbar */}
            <footer className="flex h-10 shrink-0 items-center border-t border-[#2a3232] bg-[linear-gradient(90deg,#5e6c6c_0%,#4c5858_8%,#5a6866_18%,#465452_27%,#56625f_40%,#5c6a6c_50%,#4f5e5c_60%,#63716e_70%,#4c5a57_80%,#5b6c66_88%,#435250_100%)]">
                <button type="button" aria-label="Start" className="mx-[9px]">
                    <Ico s={36} box="0 0 36 36">
                        <circle cx="18" cy="18" r="17" fill="#1b4f80" stroke="#9cc0d8" /><path fill="#2ea8e0" stroke="none" d="M3 22q15 6 30 0-3 12-15 12T3 22z" /><ellipse cx="18" cy="9" rx="12" ry="7" fill="#6a90ae" stroke="none" />
                        <path fill="#e8622c" stroke="none" d="M10 10q4-3 8 0l-2 8q-4-3-8 0z" /><path fill="#8cc43c" stroke="none" d="M19 11q4 2 9 0l-2 8q-5 2-9 0z" />
                        <path fill="#4fb0ec" stroke="none" d="M8 19q4-3 8 0l-2 8q-4-3-8 0z" /><path fill="#fbd040" stroke="none" d="M17 20q4 2 8 0l-2 8q-4 2-8 0z" />
                    </Ico>
                </button>
                <div className="ml-1 flex">
                    {[["Explorer", <FolderIcon />], ["Gallery", <GalleryIcon />], ["Mechanics", <JointIcon />], ["Antivirus", <TrendIcon />], ["Oscilloscope", <ScopeIcon />]].map(([name, icon]) => (
                        <button key={name} type="button" aria-label={name} className="flex w-[62px] justify-center">{icon}</button>
                    ))}
                </div>
                <div className="ml-px flex gap-1">
                    <div className="flex gap-px">
                        <button type="button" aria-label="Internet Explorer" className="flex h-[38px] w-[51px] items-center justify-center rounded-xs border border-[#2c3435] bg-linear-to-br from-[#a5b0b0] to-[#6a7877] shadow-[inset_0_0_0_1px_rgba(255,255,255,0.4)]"><IeIcon /></button>
                        <span className="w-[3px] rounded-r-sm border-r border-[#b4bcbc]" />
                        <span className="w-[2px] rounded-r-sm border-r border-[#b4bcbc]" />
                    </div>
                    <TaskButton label="Mail"><MailIcon /></TaskButton>
                    <TaskButton label="Skype"><SkypeIcon /></TaskButton>
                    <TaskButton label="Download manager"><GlobeIcon /></TaskButton>
                    <TaskButton label="LTspice IV" active><LtTaskIcon /></TaskButton>
                </div>
                <div className="ml-auto flex h-full items-center text-white">
                    <span className="mr-3 pb-1 text-[11px]">HR</span>
                    <svg width="8" height="5" viewBox="0 0 8 5" fill="#fff" className="mr-3" aria-hidden="true"><path d="M0 5l4-4 4 4z" /></svg>
                    <div className="mr-3 flex items-center gap-2">
                        <Ico s={16} box="0 0 16 16"><path fill="#c8c8c8" stroke="none" d="M0 0h16v16H0z" /><path stroke="#fff" strokeWidth="2.500" d="M5 4q-3 5 1 8 5 2 7-3 0-4-4-5" /><path fill="#fff" stroke="none" d="M7 1v6l4-3z" /></Ico>
                        <Ico s={16} box="0 0 16 16"><path stroke="#fff" strokeWidth="1.500" d="M6 4h9v8H5V9M8 15h6M11 12v3M1 1v4h4V1M3 5v8h3M3 0v3" /></Ico>
                        <Ico s={16} box="0 0 16 16"><path fill="#fff" stroke="none" d="M0 5h3l5-4v14l-5-4H0z" /><path stroke="#fff" d="M10 6q2 2 0 4M12 4q3 4 0 8M14 2q4 6 0 12" /></Ico>
                    </div>
                    <time className="mr-[10px] text-center text-[11px] leading-[17px]">12:39<br />25.4.2013.</time>
                    <button type="button" aria-label="Show desktop" className="h-full w-[14px] border border-[#303a3a] bg-linear-to-b from-[#93a09e] to-[#4a5856]" />
                </div>
            </footer>
        </div>
    );
}
